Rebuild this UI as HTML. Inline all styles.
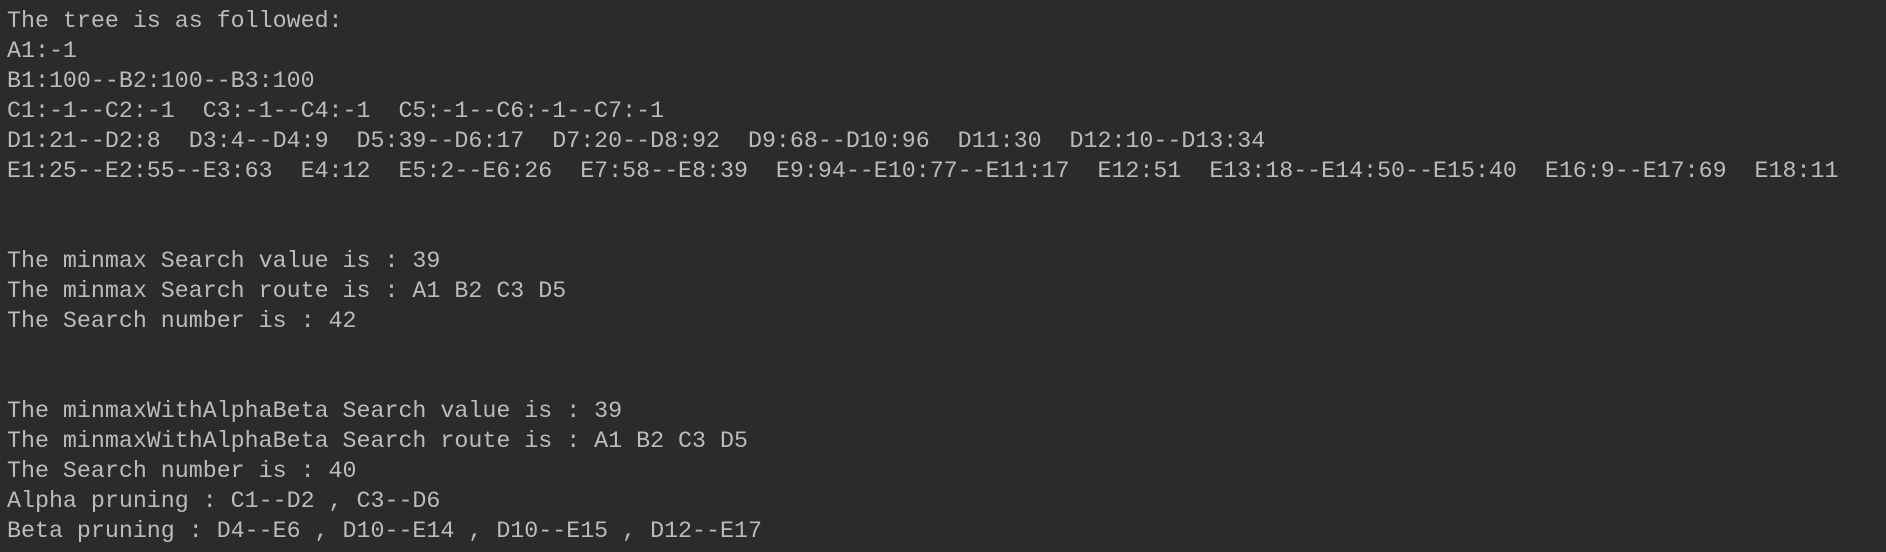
<!DOCTYPE html>
<html><head><meta charset="utf-8"><style>
html,body{margin:0;padding:0;background:#2b2b2b;width:1886px;height:552px;overflow:hidden}
pre{margin:0;position:absolute;left:7px;top:5.5px;font-family:"Liberation Mono","DejaVu Sans Mono",monospace;font-size:23.3px;line-height:30px;color:#bbbbbb;white-space:pre}
</style></head><body>
<pre>The tree is as followed:
A1:-1
B1:100--B2:100--B3:100
C1:-1--C2:-1  C3:-1--C4:-1  C5:-1--C6:-1--C7:-1
D1:21--D2:8  D3:4--D4:9  D5:39--D6:17  D7:20--D8:92  D9:68--D10:96  D11:30  D12:10--D13:34
E1:25--E2:55--E3:63  E4:12  E5:2--E6:26  E7:58--E8:39  E9:94--E10:77--E11:17  E12:51  E13:18--E14:50--E15:40  E16:9--E17:69  E18:11


The minmax Search value is : 39
The minmax Search route is : A1 B2 C3 D5
The Search number is : 42


The minmaxWithAlphaBeta Search value is : 39
The minmaxWithAlphaBeta Search route is : A1 B2 C3 D5
The Search number is : 40
Alpha pruning : C1--D2 , C3--D6
Beta pruning : D4--E6 , D10--E14 , D10--E15 , D12--E17</pre>
</body></html>
